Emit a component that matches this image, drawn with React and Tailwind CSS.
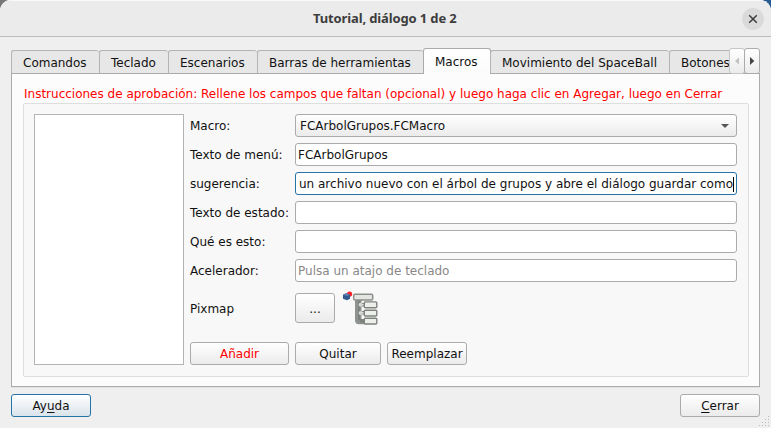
import React from "react";

const button =
  "flex items-center justify-center rounded-[3px] border border-[#ababab] bg-gradient-to-b from-white to-[#ebebeb] whitespace-nowrap";

function Tab({ label, width, last }) {
  return (
    <div
      className={`${width} flex h-[23px] shrink-0 items-center overflow-hidden whitespace-nowrap border-t border-l border-[#b4b4b4] bg-[#e7e7e7] pl-[11px] pt-[2px] rounded-tl-[3px] ${last ? "" : "rounded-tr-[3px]"}`}
    >
      {label}
    </div>
  );
}

function Field({ label, children, focused }) {
  return (
    <div className="flex h-[23px] items-center">
      <div className="w-[105px] shrink-0 pt-px">{label}</div>
      <div
        className={`flex h-[23px] w-[442px] items-center overflow-hidden whitespace-nowrap rounded-[3px] border bg-white pt-px ${focused ? "justify-end border-[#2673a5]" : "border-[#ababab] pl-[2px]"}`}
      >
        {children}
      </div>
    </div>
  );
}

function TreeIcon() {
  return (
    <svg className="ml-[7px] shrink-0" width="38" height="36" viewBox="0 -1.2 38 36">
      <path d="M13 7 H19.5 V30 H24 V33 H17 Q13 33 13 29 Z" fill="#8f938f" />
      <path d="M17 9 V29" stroke="#6f736f" strokeWidth="1" />
      <path d="M18 13.5 H24 M18 21.5 H24 M18 29.5 H24" stroke="#7e827e" strokeWidth="3.4" />
      <path d="M18.5 13.5 H24 M18.5 21.5 H24" stroke="#d8dbd7" strokeWidth="1.4" />
      <circle cx="18.6" cy="13.5" r="2" fill="#d5d8d5" />
      <circle cx="18.6" cy="21.7" r="2" fill="#d5d8d5" />
      <rect x="11.7" y="3" width="19" height="5.8" rx="1.3" fill="#e3e5e1" stroke="#8b8f8b" strokeWidth="1.5" />
      <rect x="22.3" y="10.7" width="12.5" height="5.8" rx="1" fill="#edefea" stroke="#7e827e" strokeWidth="1.4" />
      <rect x="22.3" y="19" width="12.5" height="5.8" rx="1" fill="#edefea" stroke="#7e827e" strokeWidth="1.4" />
      <rect x="22.3" y="27" width="12.5" height="5.8" rx="1" fill="#edefea" stroke="#7e827e" strokeWidth="1.4" />
      <circle cx="7.6" cy="2.8" r="2.6" fill="#f5252b" />
      <path d="M1 3.5 L4 2 L8 3.5 V7.5 L5 9 L1 7.5 Z" fill="#315b91" />
      <path d="M1 3.5 L4 2 L8 3.5 L5 4.8 Z" fill="#6184b2" />
    </svg>
  );
}

export default function App() {
  return (
    <div className="h-[428px] w-[771px] overflow-hidden bg-[linear-gradient(to_right,#777_50%,#265b91_50%)] font-['DejaVu_Sans',sans-serif] text-[12px] leading-[15px] text-[#111]">
      <div className="relative flex h-[428px] flex-col overflow-hidden rounded-t-[11px] bg-[#efefef]">
        <header className="flex h-[37px] shrink-0 items-center border-b border-t border-b-[#bcbcbc] border-t-[#f9f9f9] bg-[#ebebeb]">
          <div className="w-[313px]" />
          <h1 className="w-[146px] whitespace-nowrap font-['Noto_Sans','Open_Sans',sans-serif] text-[13px] font-bold tracking-[-0.13px] text-[#3d3d3d]">
            Tutorial, diálogo 1 de 2
          </h1>
          <div className="ml-auto mr-[7px] flex h-[22px] w-[22px] items-center justify-center rounded-full bg-[#dadada]">
            <svg width="10" height="10" viewBox="0 0 10 10" stroke="#3d3d3d" strokeWidth="1.5">
              <path d="M1.2 1.2 L8.8 8.8 M8.8 1.2 L1.2 8.8" />
            </svg>
          </div>
        </header>

        <main className="px-[11px] pt-[11px]">
          <div className="relative z-10 -mb-px flex h-[26px] items-end">
            <div className="flex w-[718px] items-end overflow-hidden">
              <div className="flex h-[26px] items-end">
                <div className="flex h-[24px] items-start">
                  <Tab label="Comandos" width="w-[88px]" />
                  <Tab label="Teclado" width="w-[69px]" />
                  <Tab label="Escenarios" width="w-[89px]" />
                  <Tab label="Barras de herramientas" width="w-[166px]" />
                </div>
                <div className="flex h-[26px] w-[68px] shrink-0 items-center rounded-t-[3px] border border-b-0 border-[#ababab] bg-gradient-to-b from-white to-[#fbfbfb] pl-[11px] pt-px">
                  Macros
                </div>
                <div className="-ml-px flex h-[24px] items-start">
                  <Tab label="Movimiento del SpaceBall" width="w-[179px]" />
                  <Tab label="Botones" width="w-[90px]" last />
                </div>
              </div>
            </div>
            <div className={`${button} h-[26px] w-[16px] shrink-0 border-[#c6c6c6]`}>
              <svg width="6" height="8" viewBox="0 0 6 8">
                <path d="M5 0.5 V7.5 L1 4 Z" fill="#c2c2c2" />
              </svg>
            </div>
            <div className={`${button} -ml-px h-[26px] w-[16px] shrink-0`}>
              <svg width="6" height="8" viewBox="0 0 6 8">
                <path d="M1 0 V8 L5.3 4 Z" fill="#444" />
              </svg>
            </div>
          </div>

          <section className="h-[314px] w-[749px] border border-[#ababab] bg-[#fcfcfc] pl-[11px] pt-[12px] shadow-[0_1px_0_#e2e2e2]">
            <p className="h-[17px] whitespace-nowrap pl-px pt-px text-[#ff0000]">
              Instrucciones de aprobación: Rellene los campos que faltan (opcional) y luego haga clic en Agregar, luego en Cerrar
            </p>
            <div className="flex h-[274px] w-[726px] rounded-[2px] border border-[#dedede] bg-[#f8f8f8] pl-[10px] pt-[10px]">
              <div className="h-[251px] w-[150px] shrink-0 border border-[#b4b4b4] bg-white" />
              <div className="ml-[6px] flex flex-col">
                <div className="flex flex-col gap-[6px]">
                  <div className="flex h-[23px] items-center">
                    <div className="w-[105px] pt-px">Macro:</div>
                    <div className={`${button} h-[23px] w-[442px]`}>
                      <span className="flex-1 pl-[4px] pt-px">FCArbolGrupos.FCMacro</span>
                      <svg className="mr-[7px]" width="8" height="4" viewBox="0 0 8 4">
                        <path d="M0 0 H8 L4 4 Z" fill="#555" />
                      </svg>
                    </div>
                  </div>
                  <Field label="Texto de menú:">FCArbolGrupos</Field>
                  <Field label="sugerencia:" focused>
                    <span>un archivo nuevo con el árbol de grupos y abre el diálogo guardar como</span>
                    <span className="mr-[2px] h-[15px] w-px shrink-0 bg-black" />
                  </Field>
                  <Field label="Texto de estado:" />
                  <Field label="Qué es esto:" />
                  <Field label="Acelerador:">
                    <span className="text-[#888]">Pulsa un atajo de teclado</span>
                  </Field>
                </div>
                <div className="mt-[8px] flex h-[36px] items-center">
                  <div className="w-[105px] pt-[2px]">Pixmap</div>
                  <button className={`${button} h-[30px] w-[40px] pt-[2px]`}>...</button>
                  <TreeIcon />
                </div>
                <div className="mt-[16px] flex gap-[6px]">
                  <button className={`${button} h-[23px] w-[99px] pt-[2px] text-[#ff0000]`}>Añadir</button>
                  <button className={`${button} h-[23px] w-[86px] pt-[2px]`}>Quitar</button>
                  <button className={`${button} h-[23px] w-[80px] pt-[2px]`}>Reemplazar</button>
                </div>
              </div>
            </div>
          </section>

          <footer className="mt-[7px] flex justify-between">
            <button className="flex h-[23px] w-[80px] items-center justify-center rounded-[3px] border border-[#2673a5] bg-gradient-to-b from-white to-[#dae3eb] pt-[2px]">
              Ay<u className="underline-offset-2">u</u>da
            </button>
            <button className={`${button} h-[23px] w-[80px] pt-[2px]`}>
              <u className="underline-offset-2">C</u>errar
            </button>
          </footer>
        </main>
        <svg className="absolute bottom-0 right-0" width="13" height="13" fill="#b8b8b8">
          <path d="M10 1h1v1h-1zM7 4h1v1h-1zM10 4h1v1h-1zM4 7h1v1h-1zM7 7h1v1h-1zM10 7h1v1h-1zM1 10h1v1h-1zM4 10h1v1h-1zM7 10h1v1h-1zM10 10h1v1h-1z" />
        </svg>
      </div>
    </div>
  );
}
